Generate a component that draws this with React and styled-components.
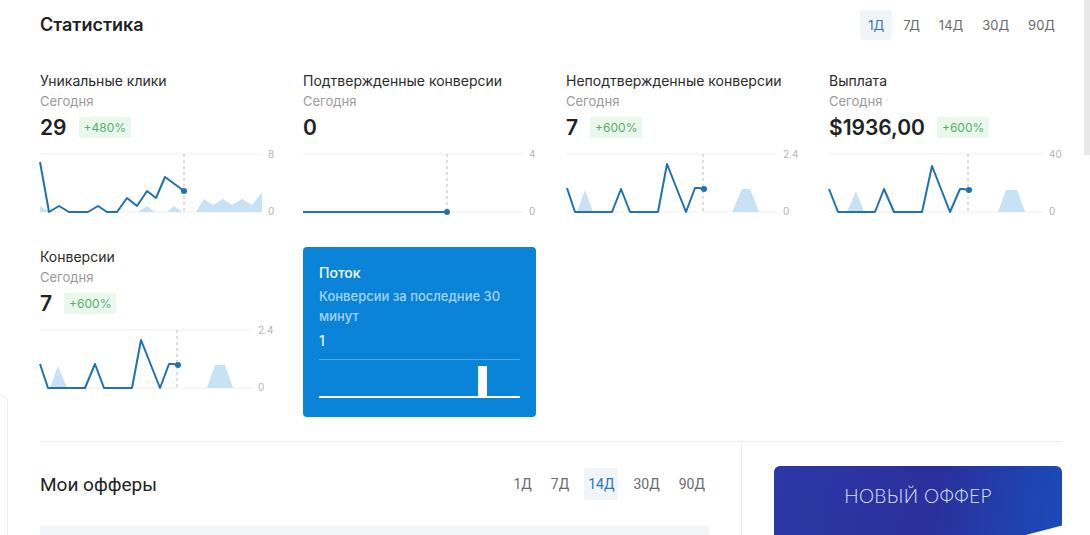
import React from "react";
import styled, { createGlobalStyle } from "styled-components";

const GlobalStyle = createGlobalStyle`
  html, body {
    margin: 0;
    padding: 0;
    background: #fff;
    overflow: hidden;
  }
  body {
    font-family: Inter, "Noto Sans", sans-serif;
    color: #222;
  }
`;

const periods = ["1Д", "7Д", "14Д", "30Д", "90Д"];

const stats = [
  {
    id: "clicks",
    title: "Уникальные клики",
    value: "29",
    badge: "+480%",
    max: "8",
    gridW: 222,
    dashX: 144,
    line: [[0, 8], [9, 58], [19, 52], [29, 58], [48, 58], [58, 52], [67, 58], [77, 58], [87, 44], [97, 52], [107, 37], [116, 44], [125, 23], [144, 37]],
    areas: [
      [[0, 52], [10, 58], [0, 58]],
      [[98, 58], [107, 52], [115, 58]],
      [[127, 58], [134, 52], [142, 58]],
      [[156, 58], [164, 45], [173, 51], [183, 45], [192, 51], [202, 45], [212, 51], [222, 38], [222, 58]],
    ],
  },
  {
    id: "confirmed",
    title: "Подтвержденные конверсии",
    value: "0",
    max: "4",
    gridW: 220,
    dashX: 144,
    line: [[0, 58], [144, 58]],
    areas: [],
  },
  {
    id: "unconfirmed",
    title: "Неподтвержденные конверсии",
    value: "7",
    badge: "+600%",
    max: "2.4",
    gridW: 211,
    dashX: 137,
    line: [[1, 34], [9, 58], [46, 58], [55, 35], [64, 58], [92, 58], [101, 10], [120, 58], [129, 34], [133, 34], [138, 35]],
    areas: [
      [[11, 58], [19, 36], [27, 58]],
      [[166, 58], [176, 35], [184, 35], [193, 58]],
    ],
  },
  {
    id: "payout",
    title: "Выплата",
    value: "$1936,00",
    badge: "+600%",
    max: "40",
    gridW: 214,
    dashX: 139,
    line: [[0, 35], [9, 58], [46, 58], [55, 35], [65, 58], [93, 58], [103, 12], [121, 58], [131, 35], [134, 35], [140, 36]],
    areas: [
      [[18, 58], [27, 37], [35, 58]],
      [[169, 58], [177, 36], [188, 36], [196, 58]],
    ],
  },
  {
    id: "conversions",
    title: "Конверсии",
    value: "7",
    badge: "+600%",
    max: "2.4",
    gridW: 212,
    dashX: 137,
    line: [[0, 34], [8, 58], [45, 58], [55, 34], [64, 58], [92, 58], [101, 10], [120, 58], [129, 34], [133, 34], [138, 35]],
    areas: [
      [[10, 58], [18, 36], [27, 58]],
      [[167, 58], [175, 35], [185, 35], [193, 58]],
    ],
  },
];

const toPoints = (pts) => pts.map(([x, y]) => `${x},${y + 4}`).join(" ");

function Spark({ line, areas, dashX, max, gridW }) {
  const last = line[line.length - 1];
  return (
    <S.Chart width="233" height="66" viewBox="0 0 233 66">
      <line x1="0" y1="4" x2={gridW} y2="4" stroke="#efefef" />
      <line x1="0" y1="62" x2={gridW} y2="62" stroke="#efefef" />
      {areas.map((a, i) => (
        <polygon key={i} points={toPoints(a)} fill="#c7e1f5" />
      ))}
      <line x1={dashX} y1="4" x2={dashX} y2="62" stroke="#b9b9b9" strokeDasharray="3 3" />
      <polyline points={toPoints(line)} fill="none" stroke="#1f72b0" strokeWidth="2" strokeLinejoin="round" />
      <circle cx={last[0]} cy={last[1] + 4} r="3" fill="#1f72b0" />
      <text x={gridW + 6} y="5" dominantBaseline="middle">{max}</text>
      <text x={gridW + 6} y="62" dominantBaseline="middle">0</text>
    </S.Chart>
  );
}

function StatCard({ stat }) {
  return (
    <S.Stat>
      <S.StatTitle>{stat.title}</S.StatTitle>
      <S.Today>Сегодня</S.Today>
      <S.ValueRow>
        <S.Value>{stat.value}</S.Value>
        {stat.badge && <S.Badge>{stat.badge}</S.Badge>}
      </S.ValueRow>
      <Spark {...stat} />
    </S.Stat>
  );
}

function Periods({ active, variant }) {
  return (
    <S.Periods $variant={variant}>
      {periods.map((p) => (
        <S.Period key={p} $active={p === active} $variant={variant}>
          {p}
        </S.Period>
      ))}
    </S.Periods>
  );
}

function FlowCard() {
  return (
    <S.Flow>
      <S.FlowTitle>Поток</S.FlowTitle>
      <S.FlowSub>Конверсии за последние 30 минут</S.FlowSub>
      <S.FlowValue>1</S.FlowValue>
      <S.FlowChart>
        <S.FlowBar style={{ left: 159, height: 30 }} />
      </S.FlowChart>
    </S.Flow>
  );
}

export default function App() {
  return (
    <>
      <GlobalStyle />
      <S.Page>
        <S.Header>
          <S.Title>Статистика</S.Title>
          <Periods active="1Д" />
        </S.Header>

        <S.Grid>
          {stats.slice(0, 4).map((s) => (
            <StatCard key={s.id} stat={s} />
          ))}
          <StatCard stat={stats[4]} />
          <FlowCard />
        </S.Grid>

        <S.Bottom>
          <S.Offers>
            <S.OffersHeader>
              <S.OffersTitle>Мои офферы</S.OffersTitle>
              <Periods active="14Д" variant="roboto" />
            </S.OffersHeader>
            <S.TableHead />
          </S.Offers>
          <S.Side>
            <S.NewOffer>НОВЫЙ ОФФЕР</S.NewOffer>
          </S.Side>
        </S.Bottom>
      </S.Page>
      <S.ScrollThumb />
      <S.EdgeCard />
    </>
  );
}

const S = {
  Page: styled.div`
    width: 1090px;
    height: 535px;
    overflow: hidden;
    box-sizing: border-box;
    padding: 0 28px 0 40px;
  `,

  Header: styled.div`
    display: flex;
    justify-content: space-between;
    align-items: center;
    padding-top: 10px;
    height: 30px;
  `,

  Title: styled.h2`
    margin: 0;
    font-size: 18px;
    font-weight: 600;
    color: #222;
    margin-top: -2px;
  `,

  Periods: styled.div`
    display: flex;
    gap: ${(p) => (p.$variant === "roboto" ? "11px" : "3px")};
    margin-right: ${(p) => (p.$variant === "roboto" ? "0" : "-1px")};
  `,

  Period: styled.span`
    display: flex;
    align-items: center;
    height: ${(p) => (p.$variant === "roboto" ? "32px" : "30px")};
    padding: ${(p) => (p.$variant === "roboto" ? "0 4px" : "0 8px")};
    border-radius: 3px;
    font-family: ${(p) => (p.$variant === "roboto" ? "Roboto, sans-serif" : "Inter, sans-serif")};
    font-size: ${(p) => (p.$variant === "roboto" ? "14px" : "13px")};
    color: ${(p) => (p.$active ? "#2a79b5" : "#6b6b6b")};
    background: ${(p) => (p.$active ? "#f1f4f8" : "transparent")};
  `,

  Grid: styled.div`
    display: grid;
    grid-template-columns: repeat(4, 233px);
    column-gap: 30px;
    row-gap: 31px;
    margin-top: 31px;
    align-items: start;
  `,

  Stat: styled.div`
    display: flex;
    flex-direction: column;
  `,

  StatTitle: styled.div`
    font-size: 14px;
    line-height: 20px;
    color: #2b2b2b;
  `,

  Today: styled.div`
    font-size: 13px;
    line-height: 20px;
    color: #9a9a9a;
  `,

  ValueRow: styled.div`
    display: flex;
    align-items: center;
    gap: 12px;
    height: 28px;
    margin-top: 2px;
  `,

  Value: styled.div`
    font-size: 21px;
    font-weight: 600;
    color: #222;
  `,

  Badge: styled.span`
    font-size: 12px;
    line-height: 21px;
    padding: 0 5px;
    color: #57b06b;
    background: #eaf7ed;
    border-radius: 2px;
  `,

  Chart: styled.svg`
    display: block;
    margin-top: 9px;
    overflow: visible;

    text {
      font-family: Inter, sans-serif;
      font-size: 10px;
      fill: #b5b5b5;
    }
  `,

  Flow: styled.div`
    height: 170px;
    box-sizing: border-box;
    padding: 16px;
    background: #0a84d9;
    border-radius: 4px;
    color: #fff;
  `,

  FlowTitle: styled.div`
    font-size: 14px;
    line-height: 20px;
    font-weight: 500;
  `,

  FlowSub: styled.div`
    margin-top: 3px;
    font-size: 13px;
    line-height: 20px;
    font-weight: 500;
    color: #a6d3f6;
  `,

  FlowValue: styled.div`
    margin-top: 5px;
    font-size: 14px;
    line-height: 20px;
  `,

  FlowChart: styled.div`
    position: relative;
    margin-top: 8px;
    height: 36px;
    border-top: 1px solid #4aa9ec;
    border-bottom: 2px solid #fff;
  `,

  FlowBar: styled.div`
    position: absolute;
    bottom: 0;
    width: 9px;
    background: #fff;
  `,

  Bottom: styled.div`
    display: flex;
    margin-top: 24px;
    border-top: 1px solid #ececec;
    height: 120px;
  `,

  Offers: styled.div`
    width: 669px;
    padding-right: 32px;
    border-right: 1px solid #ececec;
  `,

  OffersHeader: styled.div`
    display: flex;
    justify-content: space-between;
    align-items: center;
    padding-top: 26px;
  `,

  OffersTitle: styled.h3`
    margin: 0;
    font-family: Roboto, sans-serif;
    font-size: 19px;
    font-weight: 400;
    color: #222;
  `,

  TableHead: styled.div`
    margin-top: 26px;
    height: 40px;
    background: #f3f5f8;
  `,

  Side: styled.div`
    flex: 1;
    padding: 24px 0 0 32px;
  `,

  NewOffer: styled.button`
    display: block;
    width: 288px;
    height: 90px;
    padding: 0 0 32px;
    border: none;
    border-radius: 6px;
    background: linear-gradient(100deg, #2c38a6 0%, #2a309c 55%, #1a4cba 100%);
    clip-path: polygon(0 0, 100% 0, 100% 66%, 60% 100%, 0 100%);
    font-family: Lato, "Open Sans", sans-serif;
    font-weight: 300;
    font-size: 19px;
    letter-spacing: 0.4px;
    color: #dfe2f7;
    cursor: pointer;
  `,

  ScrollThumb: styled.div`
    position: fixed;
    top: 0;
    right: 0;
    width: 6px;
    height: 155px;
    background: #e8e8e8;
  `,

  EdgeCard: styled.div`
    position: fixed;
    left: -12px;
    top: 395px;
    width: 18px;
    height: 200px;
    border: 1px solid #ececec;
    border-radius: 8px;
  `,
};
